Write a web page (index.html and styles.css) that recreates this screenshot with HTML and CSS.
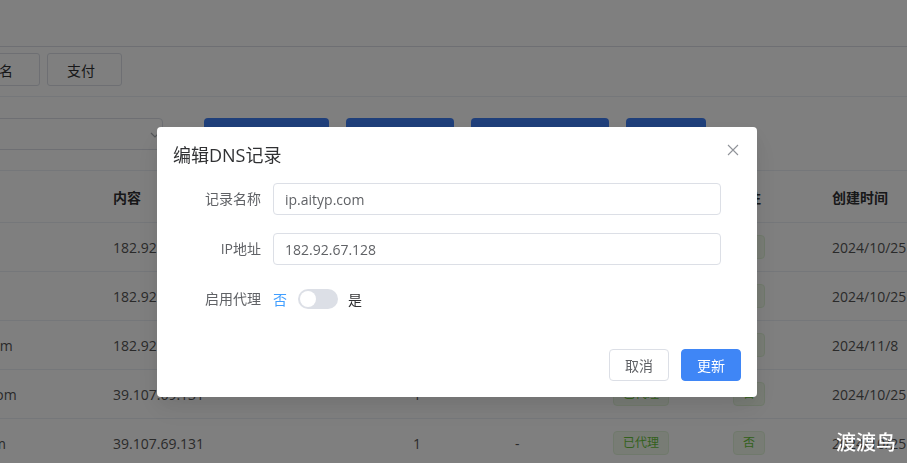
FILE: index.html
```html
<!DOCTYPE html>
<html>
<head>
    <title>DNS 记录管理</title>
    <link rel="stylesheet" href="styles.css">
</head>
<body>
    <div class="page">
        <div class="topbar"></div>

        <div class="tabs">
            <button class="tab">全部</button>
            <button class="tab">域名</button>
            <button class="tab">支付</button>
        </div>

        <div class="toolbar">
            <div class="select">
                <span class="select-value">aityp.com</span>
                <svg class="select-arrow" width="12" height="12" viewBox="0 0 12 12"><path d="M2 4l4 4 4-4" fill="none" stroke="#a8abb2" stroke-width="1.2"/></svg>
            </div>
            <button class="btn-primary w125">添加解析记录</button>
            <button class="btn-primary w108">批量导入</button>
            <button class="btn-primary w138">同步 Cloudflare</button>
            <button class="btn-primary w80">刷新</button>
        </div>

        <table class="records">
            <colgroup>
                <col style="width:218px">
                <col style="width:300px">
                <col style="width:102px">
                <col style="width:98px">
                <col style="width:120px">
                <col style="width:99px">
                <col style="width:150px">
            </colgroup>
            <thead>
                <tr>
                    <th>记录名称</th>
                    <th>内容</th>
                    <th>TTL</th>
                    <th>优先级</th>
                    <th>代理状态</th>
                    <th>备注</th>
                    <th>创建时间</th>
                </tr>
            </thead>
            <tbody>
                <tr>
                    <td>dodoniao.com</td>
                    <td>182.92.67.128</td>
                    <td>1</td>
                    <td>-</td>
                    <td><span class="tag">已代理</span></td>
                    <td><span class="tag">否</span></td>
                    <td>2024/10/25</td>
                </tr>
                <tr>
                    <td>ip.aityp.com</td>
                    <td>182.92.67.128</td>
                    <td>1</td>
                    <td>-</td>
                    <td><span class="tag">已代理</span></td>
                    <td><span class="tag">否</span></td>
                    <td>2024/10/25</td>
                </tr>
                <tr>
                    <td>api.dodoniao.com</td>
                    <td>182.92.67.128</td>
                    <td>1</td>
                    <td>-</td>
                    <td><span class="tag">已代理</span></td>
                    <td><span class="tag">否</span></td>
                    <td>2024/11/8</td>
                </tr>
                <tr>
                    <td>cdn.dodoniao.com</td>
                    <td>39.107.69.131</td>
                    <td>1</td>
                    <td>-</td>
                    <td><span class="tag">已代理</span></td>
                    <td><span class="tag">否</span></td>
                    <td>2024/10/25</td>
                </tr>
                <tr>
                    <td>ss.dodoniao.com</td>
                    <td>39.107.69.131</td>
                    <td>1</td>
                    <td>-</td>
                    <td><span class="tag">已代理</span></td>
                    <td><span class="tag">否</span></td>
                    <td>2024/10/25</td>
                </tr>
            </tbody>
        </table>
    </div>

    <div class="overlay">
        <div class="dialog">
            <div class="dialog-header">
                <span class="dialog-title">编辑DNS记录</span>
                <button class="dialog-close">
                    <svg width="12" height="12" viewBox="0 0 12 12"><path d="M1 1l10 10M11 1L1 11" stroke="#909399" stroke-width="1.1" fill="none"/></svg>
                </button>
            </div>
            <div class="dialog-body">
                <div class="form-item">
                    <label class="form-label">记录名称</label>
                    <input class="form-input" type="text" value="ip.aityp.com">
                </div>
                <div class="form-item">
                    <label class="form-label">IP地址</label>
                    <input class="form-input" type="text" value="182.92.67.128">
                </div>
                <div class="form-item">
                    <label class="form-label">启用代理</label>
                    <div class="switch-wrap">
                        <span class="switch-text active">否</span>
                        <span class="switch"><span class="switch-knob"></span></span>
                        <span class="switch-text">是</span>
                    </div>
                </div>
            </div>
            <div class="dialog-footer">
                <button class="btn btn-default">取消</button>
                <button class="btn btn-blue">更新</button>
            </div>
        </div>
    </div>

    <div class="watermark">渡渡鸟</div>
</body>
</html>
```

FILE: styles.css
```css
* { margin: 0; padding: 0; box-sizing: border-box; }
body { font-family: 'Open Sans', 'Noto Sans CJK SC', sans-serif; font-size: 14px; color: #606266; background: #fff; overflow: hidden; }
button { font-family: inherit; font-size: 14px; cursor: pointer; }

.page { margin-left: -125px; padding-left: 8px; width: 1200px; }
.topbar { height: 47px; border-bottom: 1px solid #dcdfe6; margin-left: -8px; }
.tabs { display: flex; gap: 7px; padding: 6px 0 10px; border-bottom: 1px solid #ebeef5; margin-left: -8px; padding-left: 8px; }
.tab { width: 75px; height: 33px; padding-right: 7px; background: #fff; border: 1px solid #dcdfe6; border-radius: 3px; color: #303133; }

.toolbar { display: flex; align-items: center; padding-top: 21px; height: 53px; }
.select { width: 280px; height: 32px; border: 1px solid #dcdfe6; border-radius: 4px; display: flex; align-items: center; justify-content: space-between; padding: 0 1px 0 11px; color: #606266; }
.select-arrow { margin-top: 2px; }
.btn-primary { height: 32px; border: none; border-radius: 4px; background: #3e7ef4; color: #fff; margin-left: 17px; }
.btn-primary.w125 { width: 125px; margin-left: 41px; }
.btn-primary.w108 { width: 108px; }
.btn-primary.w138 { width: 138px; }
.btn-primary.w80 { width: 80px; }

.records { margin-top: 20px; border-collapse: collapse; table-layout: fixed; border-top: 1px solid #ebeef5; }
.records th { height: 52px; text-align: left; padding: 0 12px; font-weight: 700; color: #303133; border-bottom: 1px solid #ebeef5; white-space: nowrap; }
.records td { height: 49px; padding: 0 12px; color: #555; border-bottom: 1px solid #ebeef5; white-space: nowrap; }
.tag { display: inline-block; height: 24px; line-height: 22px; padding: 0 9px; font-size: 12px; color: #67c23a; background: #f0f9eb; border: 1px solid #e1f3d8; border-radius: 4px; }

.overlay { position: fixed; top: 0; left: 0; right: 0; bottom: 0; background: rgba(0,0,0,0.5); z-index: 10; }
.dialog { position: relative; width: 600px; margin: 127px 0 0 157px; background: #fff; border-radius: 4px; box-shadow: 0 12px 32px 4px rgba(0,0,0,0.04), 0 8px 20px rgba(0,0,0,0.08); }
.dialog-header { padding: 16px 16px 16px; }
.dialog-title { font-size: 18px; line-height: 24px; color: #303133; display: block; }
.dialog-close { position: absolute; top: 15px; right: 16px; width: 16px; height: 16px; border: none; background: none; display: flex; align-items: center; justify-content: center; }
.dialog-body { padding: 0 36px 0 16px; }

.form-item { display: flex; align-items: center; height: 32px; margin-bottom: 18px; }
.form-label { width: 100px; padding-right: 12px; text-align: right; color: #606266; line-height: 32px; }
.form-input { flex: 1; height: 32px; border: 1px solid #dcdfe6; border-radius: 4px; padding: 0 11px; font-family: inherit; font-size: 14px; color: #606266; outline: none; }
.switch-wrap { display: flex; align-items: center; height: 32px; }
.switch-text { color: #303133; }
.switch-text.active { color: #409eff; }
.switch { display: inline-block; position: relative; width: 40px; height: 20px; margin: 0 10px 0 11px; border-radius: 10px; background: #dcdfe6; }
.switch-knob { position: absolute; top: 2px; left: 2px; width: 16px; height: 16px; border-radius: 50%; background: #fff; }

.dialog-footer { display: flex; justify-content: flex-end; gap: 12px; padding: 16px; }
.btn { width: 60px; height: 32px; border-radius: 4px; }
.btn-default { background: #fff; border: 1px solid #dcdfe6; color: #606266; }
.btn-blue { background: #3f86f6; border: 1px solid #3f86f6; color: #fff; }

.watermark { position: fixed; right: 11px; bottom: 7px; z-index: 20; font-family: 'Noto Sans CJK SC', sans-serif; font-size: 20px; font-weight: 500; color: #fff; }
```
